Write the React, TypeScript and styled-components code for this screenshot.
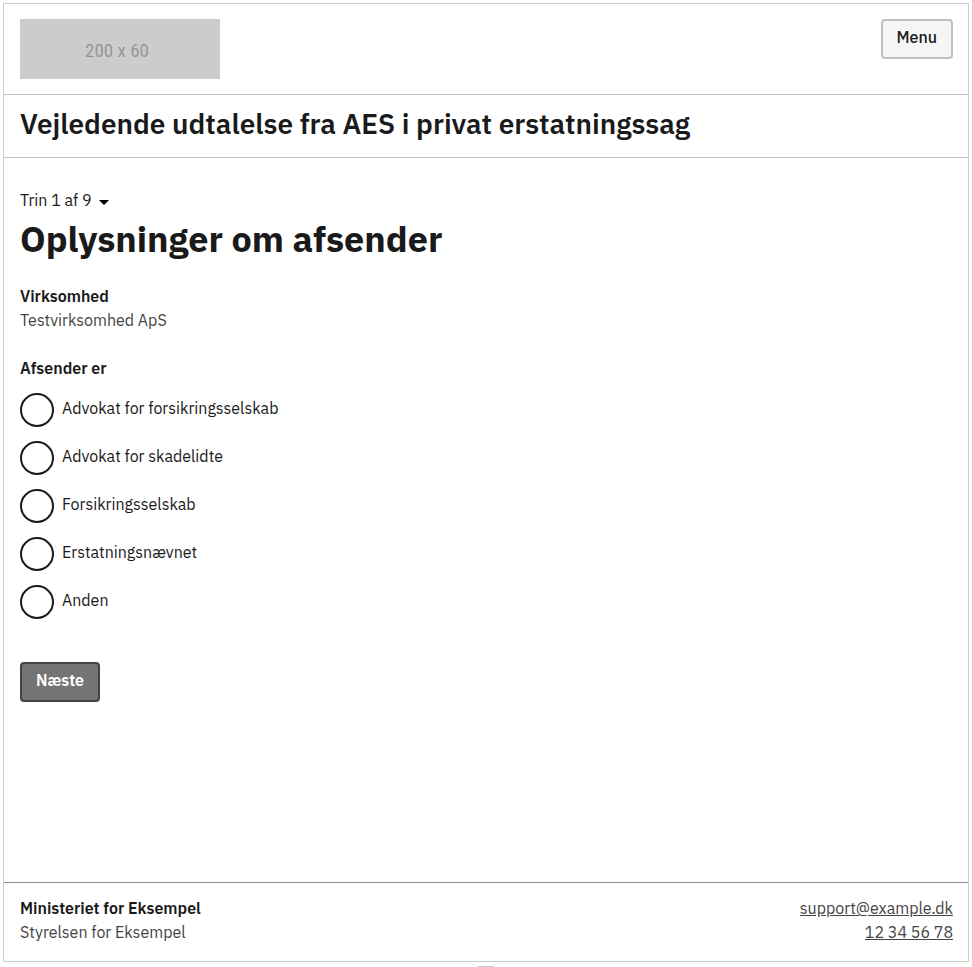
import React, { useState } from "react";
import styled, { createGlobalStyle } from "styled-components";

const GlobalStyle = createGlobalStyle`
  *, *::before, *::after { box-sizing: border-box; }
  body {
    margin: 0;
    background: #fff;
    color: #1a1a1a;
    font-family: "IBM Plex Sans", "Noto Sans", sans-serif;
    font-size: 16px;
    font-weight: 400;
    line-height: 24px;
  }
`;

const Page = styled.div`
  display: flex;
  flex-direction: column;
  align-items: center;
  min-height: 100vh;
  padding: 3px 3px 0;
`;

const Frame = styled.div`
  display: flex;
  flex: 1;
  flex-direction: column;
  width: 100%;
  border: 1px solid #ccc;
`;

const Handle = styled.div`
  width: 16px;
  height: 1px;
  margin-top: 4px;
  background: #c8c8c8;
`;

const Header = styled.header`
  display: flex;
  align-items: flex-start;
  justify-content: space-between;
  padding: 15px 15px 15px 16px;
  border-bottom: 1px solid #bfbfbf;
`;

const Logo = styled.svg`
  display: block;
  width: 200px;
  height: 60px;
`;

const Button = styled.button<{ $primary?: boolean }>`
  height: 40px;
  padding: 0 14px 4px;
  border: 2px solid ${(p) => (p.$primary ? "#454545" : "#bfbfbf")};
  border-radius: 4px;
  background: ${(p) => (p.$primary ? "#747474" : "#f5f5f5")};
  color: ${(p) => (p.$primary ? "#fff" : "#1a1a1a")};
  font: inherit;
  font-weight: ${(p) => (p.$primary ? 600 : 500)};
  cursor: pointer;
`;

const TitleBar = styled.div`
  padding: 11px 16px 15px;
  border-bottom: 1px solid #bfbfbf;
`;

const SolutionTitle = styled.p`
  margin: 0;
  font-size: 28px;
  font-weight: 600;
  line-height: 36px;
`;

const Main = styled.main`
  flex: 1;
  padding: 30px 16px 32px;
`;

const StepButton = styled.button`
  display: flex;
  align-items: center;
  gap: 7px;
  padding: 0;
  border: 0;
  background: none;
  color: #1a1a1a;
  font: inherit;
  cursor: pointer;
`;

const Heading = styled.h1`
  margin: 5px 0 23px;
  font-size: 36px;
  font-weight: 700;
  line-height: 44px;
`;

const Strong = styled.p`
  margin: 0;
  font-weight: 600;
`;

const Muted = styled.p`
  margin: 0;
  color: #454545;
`;

const Choices = styled.fieldset`
  margin: 24px 0 43px;
  padding: 0;
  border: 0;
`;

const Legend = styled.legend`
  padding: 0;
  margin-bottom: 13px;
  font-weight: 600;
`;

const Choice = styled.div`
  display: flex;
  gap: 8px;
  height: 34px;
  & + & { margin-top: 14px; }
`;

const Radio = styled.input`
  appearance: none;
  flex: none;
  width: 34px;
  height: 34px;
  margin: 0;
  border: 2px solid #1a1a1a;
  border-radius: 50%;
  background: #fff;
  cursor: pointer;
  &:checked { box-shadow: inset 0 0 0 6px #fff; background: #1a1a1a; }
`;

const ChoiceLabel = styled.label`
  padding-top: 3px;
  cursor: pointer;
`;

const Footer = styled.footer`
  display: flex;
  justify-content: space-between;
  padding: 13px 15px 17px 16px;
  border-top: 1px solid #8f8f8f;
`;

const Contact = styled.address`
  display: flex;
  flex-direction: column;
  align-items: flex-end;
  font-style: normal;
`;

const ContactLink = styled.a`
  color: #454545;
`;

const senders = [
  "Advokat for forsikringsselskab",
  "Advokat for skadelidte",
  "Forsikringsselskab",
  "Erstatningsnævnet",
  "Anden",
];

export default function App() {
  const [sender, setSender] = useState("");
  return (
    <>
      <GlobalStyle />
      <Page>
        <Frame>
          <Header>
            <Logo viewBox="0 0 200 60" role="img" aria-label="200 x 60">
              <rect width="200" height="60" fill="#ccc" />
              <text
                x="97"
                y="38"
                textAnchor="middle"
                fill="#969696"
                fontFamily="'Liberation Sans Narrow', 'Roboto Condensed', Roboto, sans-serif"
                fontSize="19"
              >
                200 x 60
              </text>
            </Logo>
            <Button type="button">Menu</Button>
          </Header>
          <TitleBar>
            <SolutionTitle>Vejledende udtalelse fra AES i privat erstatningssag</SolutionTitle>
          </TitleBar>
          <Main>
            <StepButton type="button">
              Trin 1 af 9
              <svg width="10" height="9" viewBox="0 0 10 9" aria-hidden="true">
                <path d="M0 4h10L5 9z" fill="#000" />
              </svg>
            </StepButton>
            <Heading>Oplysninger om afsender</Heading>
            <Strong>Virksomhed</Strong>
            <Muted>Testvirksomhed ApS</Muted>
            <Choices>
              <Legend>Afsender er</Legend>
              {senders.map((name, i) => (
                <Choice key={name}>
                  <Radio
                    type="radio"
                    name="sender"
                    id={`sender-${i}`}
                    checked={sender === name}
                    onChange={() => setSender(name)}
                  />
                  <ChoiceLabel htmlFor={`sender-${i}`}>{name}</ChoiceLabel>
                </Choice>
              ))}
            </Choices>
            <Button type="button" $primary>Næste</Button>
          </Main>
          <Footer>
            <div>
              <Strong>Ministeriet for Eksempel</Strong>
              <Muted>Styrelsen for Eksempel</Muted>
            </div>
            <Contact>
              <ContactLink href="mailto:support@example.dk">support@example.dk</ContactLink>
              <ContactLink href="tel:12345678">12 34 56 78</ContactLink>
            </Contact>
          </Footer>
        </Frame>
        <Handle />
      </Page>
    </>
  );
}
